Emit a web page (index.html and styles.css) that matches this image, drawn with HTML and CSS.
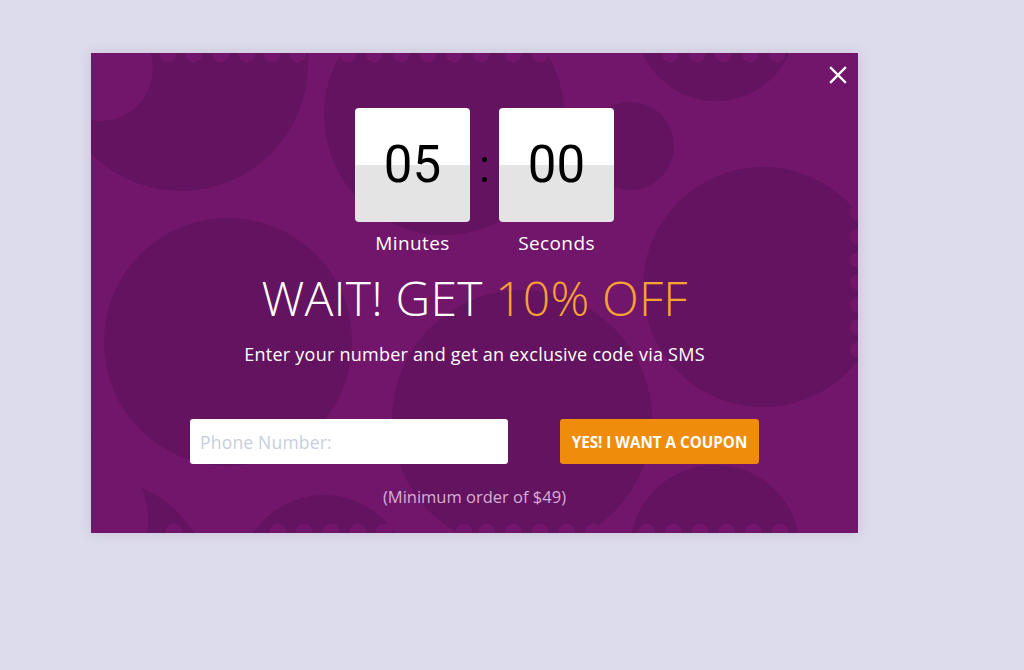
FILE: index.html
```html
<!DOCTYPE html>
<html lang="en">
<head>
<meta charset="utf-8">
<title>Wait! Get 10% off</title>
<link rel="stylesheet" href="styles.css">
</head>
<body>
<div class="page">
  <div class="popup">
    <svg class="pattern" viewBox="0 0 767 480" width="767" height="480" aria-hidden="true">
      <g fill="#63135f">
        <circle cx="90" cy="11" r="127"/>
        <circle cx="353" cy="62" r="120"/>
        <circle cx="539" cy="93" r="44"/>
        <circle cx="625" cy="-32" r="80"/>
        <circle cx="672" cy="234" r="120"/>
        <circle cx="137" cy="289" r="124"/>
        <circle cx="431" cy="367" r="130"/>
        <circle cx="9" cy="537" r="110"/>
        <circle cx="233" cy="527" r="85"/>
        <circle cx="624" cy="497" r="85"/>
      </g>
      <g fill="#72166b">
        <circle cx="9" cy="15" r="53"/>
        <circle cx="-31" cy="467" r="88"/>
        <circle cx="77" cy="1" r="8.5"/><circle cx="103" cy="1" r="8.5"/><circle cx="130" cy="1" r="8.5"/>
        <circle cx="156" cy="1" r="8.5"/><circle cx="181" cy="1" r="8.5"/><circle cx="207" cy="1" r="8.5"/>
        <circle cx="257" cy="1" r="8.5"/><circle cx="283" cy="1" r="8.5"/><circle cx="310" cy="1" r="8.5"/>
        <circle cx="337" cy="1" r="8.5"/><circle cx="363" cy="1" r="8.5"/><circle cx="390" cy="1" r="8.5"/>
        <circle cx="422" cy="1" r="8.5"/><circle cx="449" cy="1" r="8.5"/><circle cx="476" cy="1" r="8.5"/>
        <circle cx="579" cy="1" r="8.5"/><circle cx="606" cy="1" r="8.5"/><circle cx="632" cy="1" r="8.5"/>
        <circle cx="659" cy="1" r="8.5"/><circle cx="686" cy="1" r="8.5"/>
        <circle cx="83" cy="479" r="8.5"/><circle cx="187" cy="479" r="8.5"/><circle cx="213" cy="479" r="8.5"/>
        <circle cx="240" cy="479" r="8.5"/><circle cx="267" cy="479" r="8.5"/><circle cx="293" cy="479" r="8.5"/>
        <circle cx="373" cy="479" r="8.5"/><circle cx="396" cy="479" r="8.5"/><circle cx="422" cy="479" r="8.5"/>
        <circle cx="449" cy="479" r="8.5"/><circle cx="476" cy="479" r="8.5"/><circle cx="502" cy="479" r="8.5"/>
        <circle cx="556" cy="479" r="8.5"/><circle cx="582" cy="479" r="8.5"/><circle cx="609" cy="479" r="8.5"/>
        <circle cx="636" cy="479" r="8.5"/><circle cx="662" cy="479" r="8.5"/><circle cx="689" cy="479" r="8.5"/>
        <circle cx="767" cy="160" r="8"/><circle cx="767" cy="184" r="8"/><circle cx="767" cy="207" r="8"/>
        <circle cx="767" cy="229" r="8"/><circle cx="767" cy="252" r="8"/><circle cx="767" cy="274" r="8"/>
        <circle cx="767" cy="297" r="8"/>
      </g>
    </svg>

    <button class="close" type="button" aria-label="Close">
      <svg viewBox="0 0 18 18" width="18" height="18"><path d="M2 2 L16 16 M16 2 L2 16" stroke="#fff" stroke-width="2.4" stroke-linecap="square" fill="none"/></svg>
    </button>

    <div class="content">
      <div class="timer">
        <div class="unit">
          <div class="flip">05</div>
          <div class="unit-label">Minutes</div>
        </div>
        <div class="colon"><span class="dot"></span><span class="dot"></span></div>
        <div class="unit">
          <div class="flip">00</div>
          <div class="unit-label">Seconds</div>
        </div>
      </div>

      <h1 class="headline">WAIT! GET <span class="accent">10% OFF</span></h1>
      <p class="subtitle">Enter your number and get an exclusive code via SMS</p>

      <form class="signup">
        <input class="phone" type="tel" placeholder="Phone Number:">
        <button class="cta" type="button">YES! I WANT A COUPON</button>
      </form>

      <p class="note">(Minimum order of $49)</p>
    </div>
  </div>
</div>
</body>
</html>
```

FILE: styles.css
```css
* { box-sizing: border-box; }

html, body {
  margin: 0;
  padding: 0;
  height: 100%;
}

body {
  background: #dddcec;
  font-family: "Open Sans", "Noto Sans", sans-serif;
}

.page {
  padding: 53px 0 0 91px;
}

.popup {
  position: relative;
  width: 767px;
  height: 480px;
  background: #72166b;
  overflow: hidden;
  box-shadow: 0 0 12px rgba(60, 40, 90, 0.15);
}

.pattern {
  position: absolute;
  left: 0;
  top: 0;
  display: block;
}

.close {
  position: absolute;
  top: 13px;
  right: 11px;
  width: 18px;
  height: 18px;
  padding: 0;
  border: 0;
  background: none;
  cursor: pointer;
}

.close svg { display: block; }

.content {
  position: relative;
  display: flex;
  flex-direction: column;
  align-items: center;
}

.timer {
  display: flex;
  align-items: flex-start;
  margin-top: 55px;
  margin-left: 20px;
}

.unit {
  display: flex;
  flex-direction: column;
  align-items: center;
  width: 115px;
}

.flip {
  width: 115px;
  height: 114px;
  border-radius: 4px;
  background: linear-gradient(to bottom, #ffffff 0, #ffffff 50%, #e4e4e4 50%, #e4e4e4 100%);
  display: flex;
  align-items: center;
  justify-content: center;
  font-family: Roboto, "Liberation Sans", sans-serif;
  font-size: 51px;
  font-weight: 400;
  color: #000;
  line-height: 1;
  padding-bottom: 1px;
}

.unit-label {
  margin-top: 9px;
  color: #fff;
  font-size: 19px;
  letter-spacing: 0.4px;
  line-height: 24px;
}

.colon {
  width: 29px;
  height: 114px;
  display: flex;
  flex-direction: column;
  align-items: center;
  justify-content: center;
  gap: 15px;
  padding-top: 8px;
}

.dot {
  width: 5px;
  height: 5px;
  border-radius: 50%;
  background: #000;
}

.headline {
  margin: 15px 0 0;
  font-size: 48px;
  font-weight: 300;
  line-height: 56px;
  color: #fff;
  letter-spacing: 0.2px;
}

.accent { color: #f7a232; }

.subtitle {
  margin: 16px 0 0;
  font-size: 18px;
  letter-spacing: 0.25px;
  line-height: 24px;
  color: #fff;
}

.signup {
  display: flex;
  gap: 52px;
  margin: 53px 0 0;
}

.phone {
  width: 318px;
  height: 45px;
  border: 0;
  border-radius: 3px;
  background: #fff;
  padding: 0 10px;
  font-family: "Open Sans", "Noto Sans", sans-serif;
  font-size: 17.5px;
  letter-spacing: 0.2px;
  color: #333;
  outline: none;
}

.phone::placeholder { color: #c6cfdb; }

.cta {
  width: 199px;
  height: 45px;
  border: 0;
  border-radius: 3px;
  background: #f08c0c;
  color: #fff;
  font-family: "Open Sans", "Noto Sans", sans-serif;
  font-size: 15.2px;
  font-weight: 700;
  padding: 0;
  cursor: pointer;
}

.note {
  margin: 21px 0 0;
  font-size: 16.5px;
  line-height: 24px;
  color: #d9aed6;
}
```
